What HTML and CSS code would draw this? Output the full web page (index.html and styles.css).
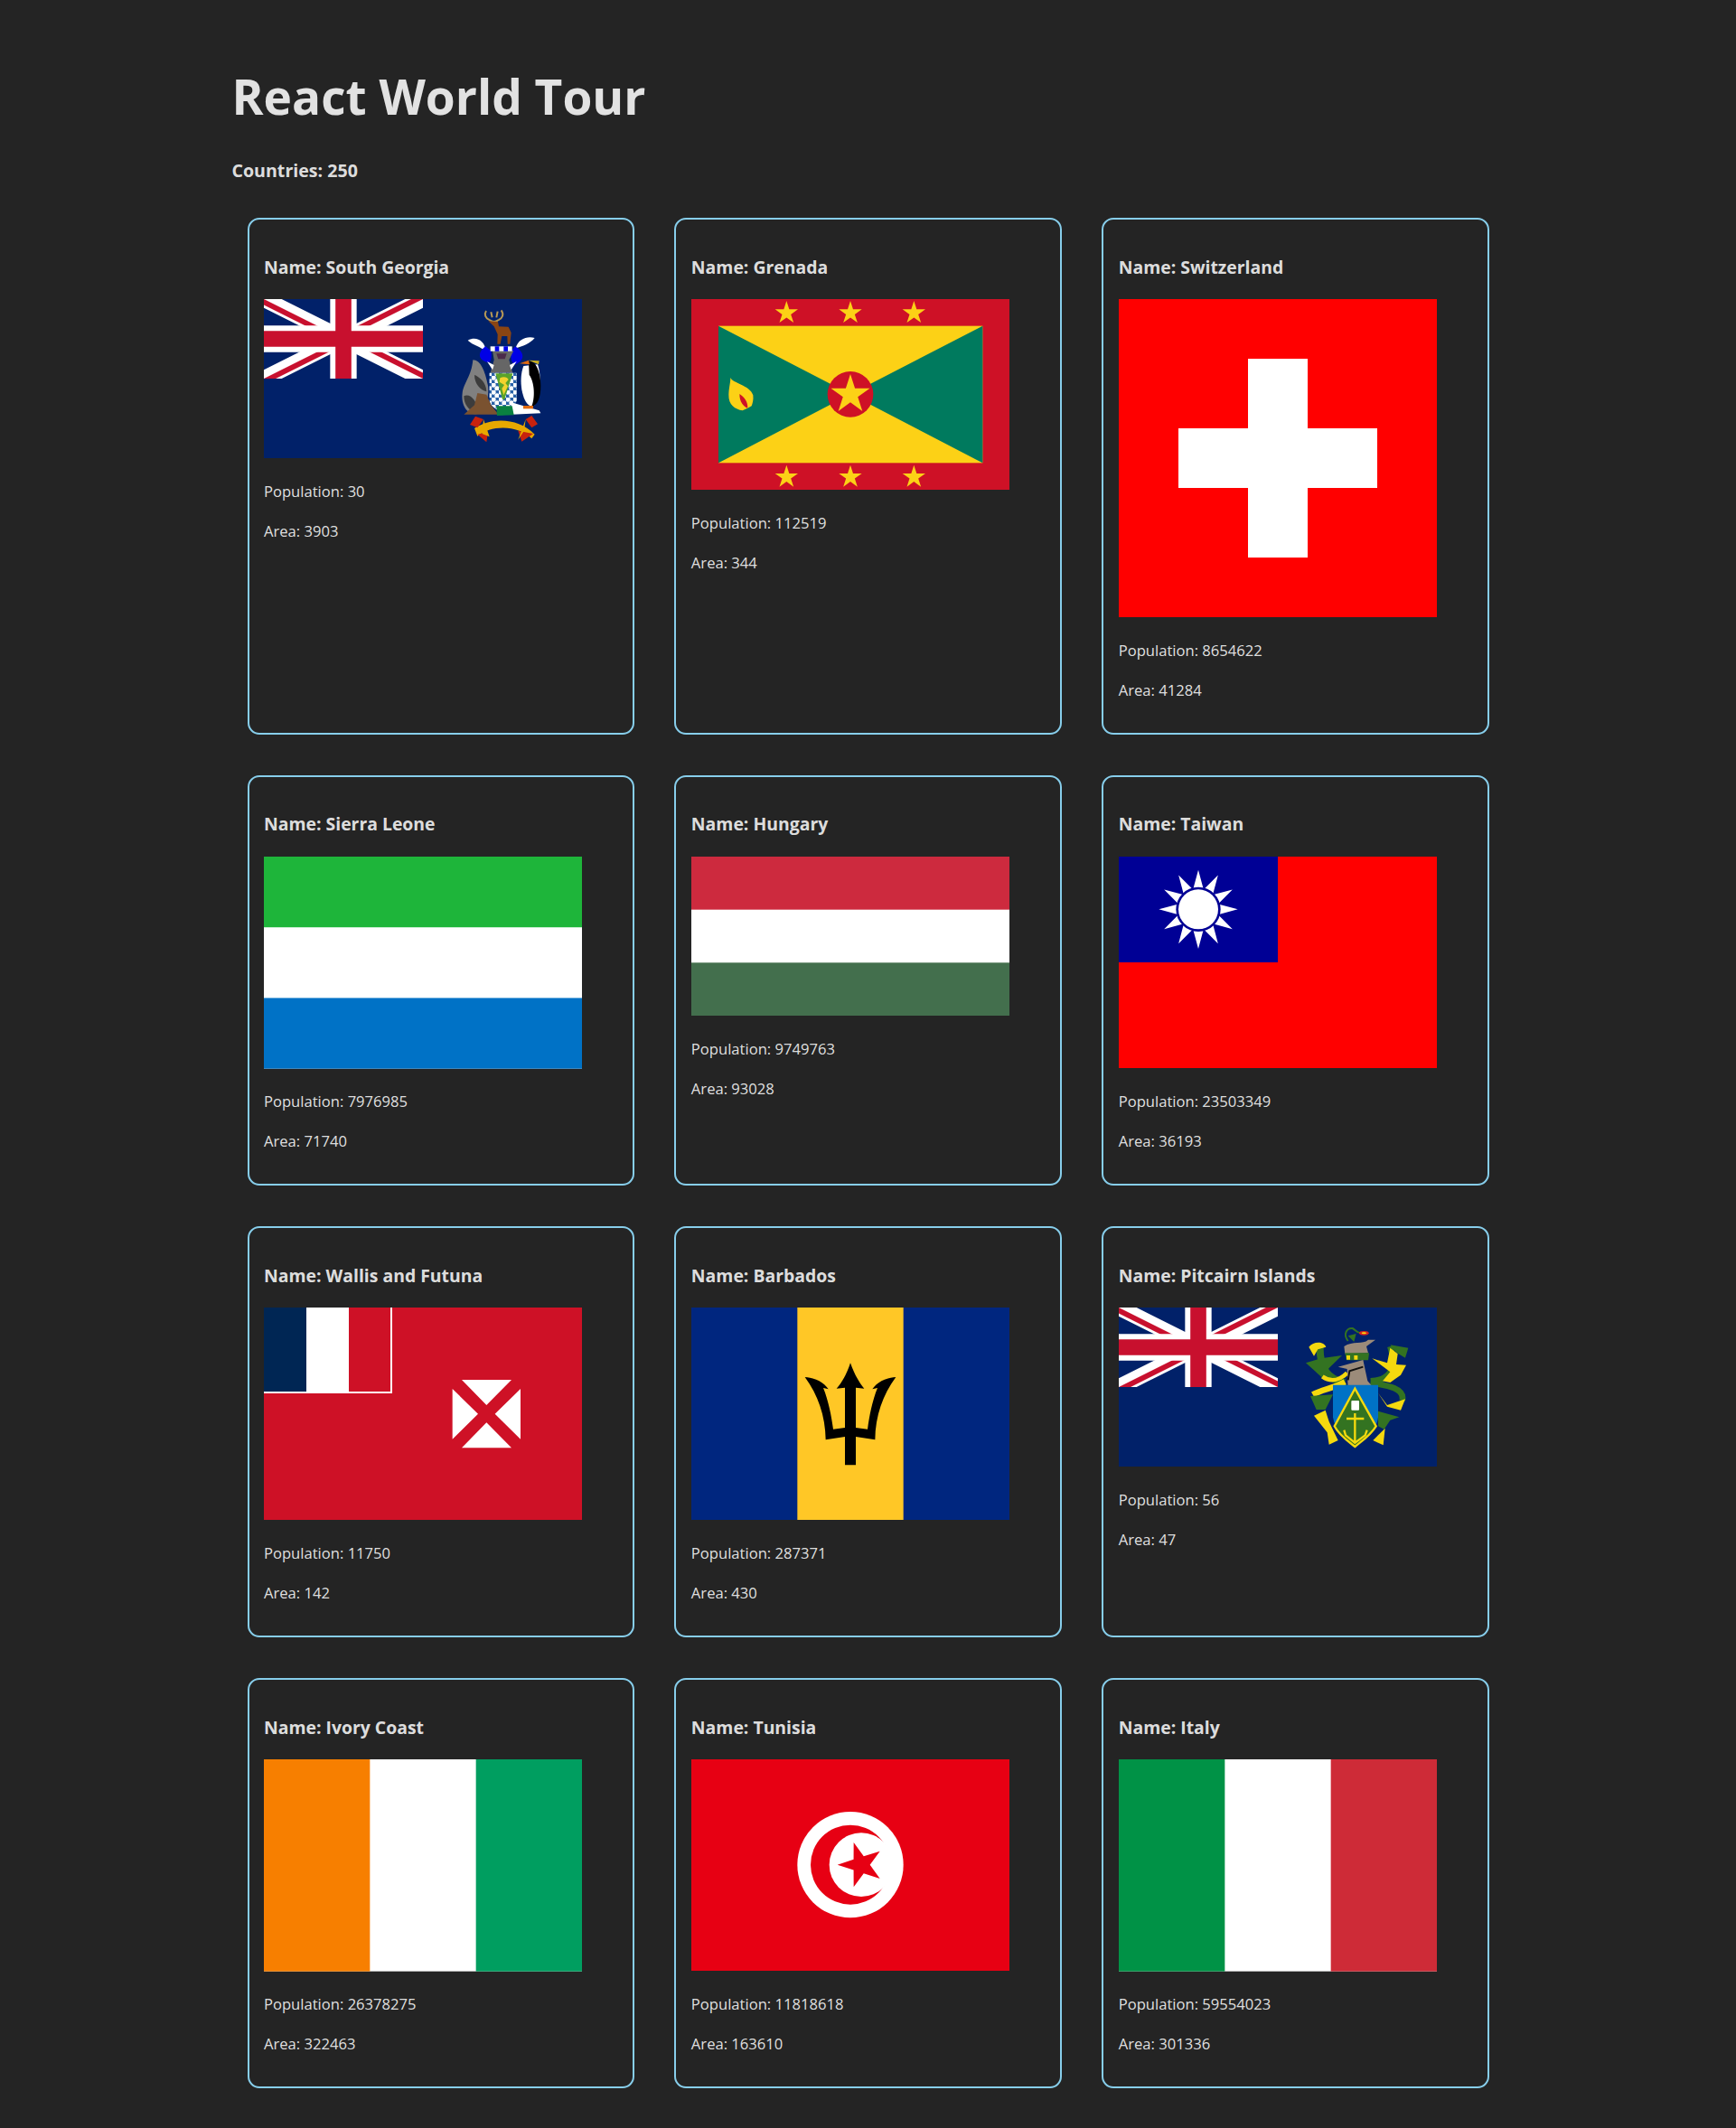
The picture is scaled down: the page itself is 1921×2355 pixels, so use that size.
FILE: index.html
```html
<!DOCTYPE html>
<html lang="en">
<head>
<meta charset="UTF-8">
<meta name="viewport" content="width=device-width, initial-scale=1.0">
<title>React World Tour</title>
<link rel="stylesheet" href="styles.css">
</head>
<body>
<svg class="flag-defs" aria-hidden="true">
    <defs>
        <clipPath id="ujClip"><path d="M30,15 h30 v15 z v15 h-30 z h-30 v-15 z v-15 h30 z"/></clipPath>
        <symbol id="unionJack" viewBox="0 0 60 30">
            <path d="M0,0 L60,30 M60,0 L0,30" stroke="#fff" stroke-width="6"/>
            <path d="M0,0 L60,30 M60,0 L0,30" stroke="#c8102e" stroke-width="4" clip-path="url(#ujClip)"/>
            <path d="M30,0 V30 M0,15 H60" stroke="#fff" stroke-width="10"/>
            <path d="M30,0 V30 M0,15 H60" stroke="#c8102e" stroke-width="6"/>
        </symbol>
        <polygon id="star" points="0,-1 .2245,-.309 .9511,-.309 .3633,.118 .5878,.809 0,.382 -.5878,.809 -.3633,.118 -.9511,-.309 -.2245,-.309"/>
        <pattern id="sgChecks" width="24" height="24" patternUnits="userSpaceOnUse">
            <circle cx="6" cy="6" r="8" fill="#fff"/>
            <circle cx="18" cy="18" r="8" fill="#fff"/>
        </pattern>
    </defs>
</svg>

<div class="app">
    <h1>React World Tour</h1>
    <h3>Countries: 250</h3>
    <div class="countries">

        <div class="country">
            <h3 class="country-name">Name: South Georgia</h3>
            <svg class="flag" viewBox="36 33 1056 528">
                <rect x="36" y="33" width="1056" height="528" fill="#012169"/>
                <use href="#unionJack" x="36" y="33" width="528" height="264"/>
                <path d="M785,102 C772,97 766,84 774,72 M815,102 C828,97 834,84 824,70 M785,102 C795,110 805,110 815,102 M790,76 l4,18 M812,74 l-4,20" fill="none" stroke="#b89a55" stroke-width="6"/>
                <path d="M781,106 L813,108 L816,124 L848,125 L857,145 L853,182 L845,182 L844,156 L826,156 L821,182 L811,182 L812,150 L800,124 Z" fill="#8a4513"/>
                <path d="M713,170 C740,155 770,170 773,206 C755,190 730,186 713,170 Z M935,162 C910,155 880,165 872,196 C895,190 920,180 935,162 Z" fill="#fff"/>
                <path d="M772,190 C750,205 742,232 775,242 C795,250 792,215 790,205 Z M870,190 C895,205 910,232 872,250 C855,250 855,215 858,205 Z" fill="#0000e6"/>
                <path d="M795,205 L865,205 L850,235 L862,278 L788,278 L800,235 Z" fill="#666"/>
                <path d="M788,190 H860 V206 H788 Z" fill="#fff"/>
                <path d="M803,190 h14 v16 h-14 Z M832,190 h14 v16 h-14 Z" fill="#0000e6"/>
                <path d="M808,214 H842 L836,232 H814 Z" fill="#4b2a4b"/>
                <path d="M777,240 L800,252 L795,268 Z M875,240 L852,252 L857,268 Z" fill="#fff"/>
                <path d="M785,278 H875 V370 C870,395 850,395 830,418 C810,395 790,395 785,370 Z" fill="#2a62a8"/>
                <path d="M785,278 H875 V370 C870,395 850,395 830,418 C810,395 790,395 785,370 Z" fill="url(#sgChecks)"/>
                <path d="M805,280 H862 L835,366 L828,366 Z" fill="#5aa32a"/>
                <path d="M820,295 C832,288 845,292 848,300 L838,312 L846,322 L832,352 L826,330 L834,318 L818,308 Z" fill="#f2d22e"/>
                <path d="M730,235 C755,235 770,270 780,320 C785,360 770,410 740,415 C710,415 690,385 695,345 C700,310 725,290 730,235 Z" fill="#808080"/>
                <path d="M735,285 C750,290 775,310 775,340 C755,335 735,315 735,285 Z M700,355 C720,345 745,370 745,405 C720,410 700,385 700,355 Z" fill="#3c3c3c"/>
                <path d="M700,416 L735,385 L745,345 L775,350 L790,385 L815,416 Z" fill="#7a5230"/>
                <path d="M855,375 L950,403 L955,412 L860,416 Z" fill="#fff"/>
                <path d="M808,388 H860 L866,418 L810,420 Z" fill="#0a8040"/>
                <path d="M898,255 C880,300 893,375 920,388 L935,385 C960,340 955,280 945,250 Z" fill="#fff"/>
                <path d="M915,240 C935,235 955,270 955,320 C955,360 945,385 925,390 C940,350 930,300 917,285 Z" fill="#000"/>
                <path d="M885,247 L915,236 L918,250 Z" fill="#e06a10"/>
                <path d="M915,236 L950,238 L948,250 Z" fill="#c8b020"/>
                <path d="M897,387 H930 V397 H897 Z" fill="#e06a10"/>
                <path d="M735,462 C790,425 880,425 935,482 L925,496 C880,450 790,450 745,488 Z" fill="#e8a800"/>
                <path d="M720,450 L738,422 L765,432 L745,460 Z M945,448 L925,420 L905,432 L925,460 Z M745,482 L780,475 L775,508 Z M880,470 L930,480 L892,506 Z" fill="#c8220e"/>
                <path d="M765,432 L785,490 L760,480 Z M905,432 L880,500 L900,470 Z" fill="#e8a800"/>
            </svg>
            <p>Population: 30</p>
            <p>Area: 3903</p>
        </div>

        <div class="country">
            <h3 class="country-name">Name: Grenada</h3>
            <svg class="flag" viewBox="45 33 1056 633">
                <rect x="45" y="33" width="1056" height="633" fill="#ce1126"/>
                <rect x="135" y="122" width="877" height="455" fill="#fcd116"/>
                <path d="M135,122 L573,349 L135,577 Z M1012,122 L573,349 L1012,577 Z" fill="#007a5e"/>
                <circle cx="573" cy="349" r="76" fill="#ce1126"/>
                <g fill="#fcd116">
                    <use href="#star" transform="translate(573,350) scale(68)"/>
                    <use href="#star" transform="translate(361,79) scale(40)"/>
                    <use href="#star" transform="translate(573,79) scale(40)"/>
                    <use href="#star" transform="translate(784,79) scale(40)"/>
                    <use href="#star" transform="translate(361,624) scale(40)"/>
                    <use href="#star" transform="translate(573,624) scale(40)"/>
                    <use href="#star" transform="translate(784,624) scale(40)"/>
                    <path d="M175,293 C180,312 240,318 250,352 C252,368 248,380 245,388 L232,395 L215,403 C190,398 168,385 169,350 C170,325 175,310 175,293 Z"/>
                </g>
                <path d="M205,348 C222,360 232,372 232,395 C218,390 205,375 205,348 Z" fill="#ce1126"/>
            </svg>
            <p>Population: 112519</p>
            <p>Area: 344</p>
        </div>

        <div class="country">
            <h3 class="country-name">Name: Switzerland</h3>
            <svg class="flag" viewBox="0 0 32 32">
                <rect width="32" height="32" fill="#f00"/>
                <path d="M13,6 H19 V13 H26 V19 H19 V26 H13 V19 H6 V13 H13 Z" fill="#fff"/>
            </svg>
            <p>Population: 8654622</p>
            <p>Area: 41284</p>
        </div>

        <div class="country">
            <h3 class="country-name">Name: Sierra Leone</h3>
            <svg class="flag" viewBox="0 0 3 2">
                <rect width="3" height="2" fill="#fff"/>
                <rect width="3" height=".6667" fill="#1eb53a"/>
                <rect y="1.3333" width="3" height=".6667" fill="#0072c6"/>
            </svg>
            <p>Population: 7976985</p>
            <p>Area: 71740</p>
        </div>

        <div class="country">
            <h3 class="country-name">Name: Hungary</h3>
            <svg class="flag" viewBox="0 0 6 3">
                <rect width="6" height="3" fill="#fff"/>
                <rect width="6" height="1" fill="#cd2a3e"/>
                <rect y="2" width="6" height="1" fill="#436f4d"/>
            </svg>
            <p>Population: 9749763</p>
            <p>Area: 93028</p>
        </div>

        <div class="country">
            <h3 class="country-name">Name: Taiwan</h3>
            <svg class="flag" viewBox="24 24 1056 702">
                <rect x="24" y="24" width="1056" height="702" fill="#f00"/>
                <rect x="24" y="24" width="528" height="351" fill="#000095"/>
                <g transform="translate(288,199)">
                    <polygon fill="#fff" points="0,-131 17.6,-65.7 65.5,-113.4 48.1,-48.1 113.4,-65.5 65.7,-17.6 131,0 65.7,17.6 113.4,65.5 48.1,48.1 65.5,113.4 17.6,65.7 0,131 -17.6,65.7 -65.5,113.4 -48.1,48.1 -113.4,65.5 -65.7,17.6 -131,0 -65.7,-17.6 -113.4,-65.5 -48.1,-48.1 -65.5,-113.4 -17.6,-65.7"/>
                    <circle r="74" fill="#000095"/>
                    <circle r="66" fill="#fff"/>
                </g>
            </svg>
            <p>Population: 23503349</p>
            <p>Area: 36193</p>
        </div>

        <div class="country">
            <h3 class="country-name">Name: Wallis and Futuna</h3>
            <svg class="flag" viewBox="36 21 1056 705">
                <rect x="36" y="21" width="1056" height="705" fill="#ce1126"/>
                <rect x="36" y="21" width="426" height="285" fill="#fff"/>
                <rect x="36" y="21" width="141" height="279" fill="#002654"/>
                <rect x="318" y="21" width="138" height="279" fill="#ce1126"/>
                <path d="M693,261 H858 L775,345 Z M693,487 H858 L775,403 Z M662,291 V458 L747,374 Z M888,291 V458 L803,374 Z" fill="#fff"/>
            </svg>
            <p>Population: 11750</p>
            <p>Area: 142</p>
        </div>

        <div class="country">
            <h3 class="country-name">Name: Barbados</h3>
            <svg class="flag" viewBox="15 21 1056 705">
                <rect x="15" y="21" width="1056" height="705" fill="#00267f"/>
                <rect x="367" y="21" width="352" height="705" fill="#ffc726"/>
                <path d="M543,205 C555,240 572,270 589,290 L561,287 V420 L600,425 C606,380 616,330 633,288 L616,292 C631,270 656,255 694,252 C651,310 626,380 625,460 L561,450 V544 H525 V450 L461,460 C460,380 435,310 392,252 C430,255 455,270 470,292 L453,288 C470,330 480,380 486,425 L525,420 V287 L497,290 C515,270 532,240 543,205 Z" fill="#000"/>
            </svg>
            <p>Population: 287371</p>
            <p>Area: 430</p>
        </div>

        <div class="country">
            <h3 class="country-name">Name: Pitcairn Islands</h3>
            <svg class="flag" viewBox="24 21 1056 528">
                <rect x="24" y="21" width="1056" height="528" fill="#012169"/>
                <use href="#unionJack" x="24" y="21" width="528" height="264"/>
                <!-- mantling, left side -->
                <path d="M775,270 C720,262 690,220 692,150" fill="none" stroke="#337321" stroke-width="24"/>
                <path d="M645,205 L695,190 L765,180 L722,222 L700,255 L675,232 Z" fill="#337321"/>
                <path d="M655,152 C670,132 705,132 712,152 L685,160 L672,182 Z" fill="#f5d90e"/>
                <path d="M700,250 C730,272 760,260 782,238" fill="none" stroke="#f5d90e" stroke-width="14"/>
                <path d="M668,310 C700,292 735,290 775,268" fill="none" stroke="#f5d90e" stroke-width="20"/>
                <path d="M660,315 L735,310 L710,360 L680,360 Z" fill="#337321"/>
                <path d="M672,380 L710,362 L722,400 L752,462 L722,476 L716,436 Z" fill="#f5d90e"/>
                <!-- mantling, right side -->
                <path d="M860,265 C920,262 950,230 925,150" fill="none" stroke="#337321" stroke-width="20"/>
                <path d="M925,145 L985,155 L975,188 L945,170 Z" fill="#337321"/>
                <path d="M865,190 L915,205 L925,155 L950,175 L945,210 L978,212 L960,245 L925,270 L900,265 L925,235 Z" fill="#f5d90e"/>
                <path d="M860,270 C920,280 975,290 965,330" fill="none" stroke="#337321" stroke-width="20"/>
                <path d="M885,305 L915,345 L975,325 L960,362 L915,350 Z" fill="#f5d90e"/>
                <path d="M885,365 L955,385 L925,395 L905,425 L885,415 Z" fill="#337321"/>
                <path d="M908,422 L902,478 L868,462 Z" fill="#f5d90e"/>
                <!-- crest -->
                <path d="M785,132 C768,110 780,88 800,90 C810,95 815,105 825,105" fill="none" stroke="#337321" stroke-width="6"/>
                <path d="M785,115 L812,108 L805,135 Z" fill="#337321"/>
                <ellipse cx="838" cy="106" rx="16" ry="7" fill="#d8251e"/>
                <ellipse cx="838" cy="106" rx="8" ry="3" fill="#f5d90e"/>
                <path d="M772,150 C800,130 835,145 852,128 L876,128 L846,150 L852,172 L775,175 Z" fill="#9b8b7a"/>
                <path d="M775,172 H855 L852,196 H780 Z" fill="#337321"/>
                <path d="M780,180 h12 v14 h-12 Z M805,180 h12 v14 h-12 Z" fill="#f5d90e"/>
                <path d="M752,218 L835,195 L850,265 L862,278 L785,292 L782,225 Z" fill="#9b8b7a"/>
                <path d="M835,218 L790,232 L785,262" fill="none" stroke="#111" stroke-width="6"/>
                <path d="M735,278 H885 V385 C880,430 840,460 808,483 C775,460 742,430 735,385 Z" fill="#0072c6"/>
                <path d="M808,290 L878,415 C860,445 830,465 808,483 C785,465 755,445 740,415 Z" fill="#337321" stroke="#f5d90e" stroke-width="7"/>
                <rect x="796" y="330" width="26" height="32" rx="3" fill="#fff"/>
                <path d="M808,372 V468 M780,390 H838 M772,428 L777,445 L808,470 L842,445 L848,428" fill="none" stroke="#f5d90e" stroke-width="7"/>
            </svg>
            <p>Population: 56</p>
            <p>Area: 47</p>
        </div>

        <div class="country">
            <h3 class="country-name">Name: Ivory Coast</h3>
            <svg class="flag" viewBox="0 0 3 2">
                <rect width="3" height="2" fill="#fff"/>
                <rect width="1" height="2" fill="#f77f00"/>
                <rect x="2" width="1" height="2" fill="#009e60"/>
            </svg>
            <p>Population: 26378275</p>
            <p>Area: 322463</p>
        </div>

        <div class="country">
            <h3 class="country-name">Name: Tunisia</h3>
            <svg class="flag" viewBox="15 21 1056 702">
                <rect x="15" y="21" width="1056" height="702" fill="#e70013"/>
                <circle cx="543" cy="371" r="176" fill="#fff"/>
                <circle cx="543" cy="371" r="132" fill="#e70013"/>
                <circle cx="579" cy="371" r="106" fill="#fff"/>
                <polygon points="500,371 553.7,353.4 554,297 587.3,342.5 641,326 608,371 641,417 587.3,399.5 554,445 553.7,388.6" fill="#e70013"/>
            </svg>
            <p>Population: 11818618</p>
            <p>Area: 163610</p>
        </div>

        <div class="country">
            <h3 class="country-name">Name: Italy</h3>
            <svg class="flag" viewBox="0 0 3 2">
                <rect width="3" height="2" fill="#fff"/>
                <rect width="1" height="2" fill="#009246"/>
                <rect x="2" width="1" height="2" fill="#ce2b37"/>
            </svg>
            <p>Population: 59554023</p>
            <p>Area: 301336</p>
        </div>

    </div>
</div>
</body>
</html>
```

FILE: styles.css
```css
body {
    margin: 0;
    background-color: #242424;
    color: rgba(255, 255, 255, 0.87);
    font-family: "Open Sans", "Noto Sans", sans-serif;
}
.flag-defs {
    position: absolute;
    width: 0;
    height: 0;
}
.app {
    max-width: 1408px;
    margin: 0 auto;
    padding-top: 35px;
}
h1 {
    font-size: 53.2px;
    line-height: 62px;
    margin: 41px 0 35px;
}
h3 {
    font-size: 19.6px;
    line-height: 31px;
    margin: 20.6px 0;
}
p {
    font-size: 16.6px;
    line-height: 26.4px;
    margin: 17.6px 0;
}
.countries {
    display: grid;
    grid-template-columns: repeat(3, 1fr);
    column-gap: 44.2px;
    row-gap: 45px;
    padding: 16.4px 16.6px 30px 17px;
}
.country {
    border: 2px solid #87ceeb;
    border-radius: 13px;
    padding: 16px 16.5px;
}
.country-name {
    font-size: 19.4px;
}
.flag {
    display: block;
    width: 352px;
    height: auto;
    margin-bottom: 23.6px;
}
```
